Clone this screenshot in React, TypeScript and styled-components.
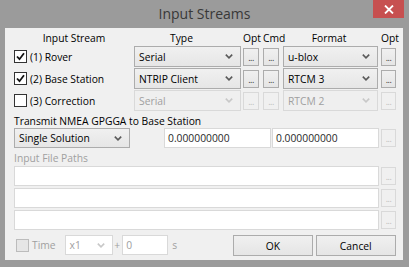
import React from "react";
import styled, { createGlobalStyle } from "styled-components";

const Global = createGlobalStyle`
  html, body { margin: 0; padding: 0; background: #999999; }
  body { font-family: "Open Sans", "Noto Sans", sans-serif; }
`;

const FONT = `"Open Sans", "Noto Sans", sans-serif`;

const Window = styled.div`
  width: 409px;
  height: 267px;
  background: #9b9b9b;
  display: flex;
  flex-direction: column;
  box-sizing: border-box;
  font-family: ${FONT};
  font-size: 10.3px;
  color: #000;
`;

const TitleBar = styled.div`
  height: 28px;
  display: grid;
  grid-template-columns: 1fr auto 1fr;
  align-items: start;
`;

const Title = styled.div`
  grid-column: 2;
  font-size: 14px;
  line-height: 27px;
  color: #383838;
`;

const CloseButton = styled.div`
  grid-column: 3;
  justify-self: end;
  margin-right: 5px;
  width: 31px;
  height: 18px;
  background: #c75050;
  display: flex;
  align-items: center;
  justify-content: center;
`;

const Client = styled.div`
  margin: 0 6px 7px 5px;
  flex: 1;
  background: #f0f0f0;
  padding: 3px 7px 0 9px;
  display: flex;
  flex-direction: column;
`;

const COLS = "120px 109px 20px 20px 98px 15px";

const HeaderGrid = styled.div`
  display: grid;
  grid-template-columns: ${COLS};
  height: 14px;
  margin-bottom: 1px;
`;

const HeaderCell = styled.div<{ $shift?: number }>`
  text-align: center;
  line-height: 14px;
  white-space: nowrap;
  padding-right: ${(p) => (p.$shift ?? 0)}px;
`;

const StreamGrid = styled.div`
  display: grid;
  grid-template-columns: ${COLS};
  grid-auto-rows: 21px;
  row-gap: 1px;
  align-items: center;
`;

const CheckRow = styled.label<{ $disabled?: boolean }>`
  display: flex;
  align-items: center;
  gap: 3px;
  color: ${(p) => (p.$disabled ? "#a0a0a0" : "#000")};
  white-space: nowrap;
`;

const Box = styled.span<{ $disabled?: boolean }>`
  width: 13px;
  height: 13px;
  box-sizing: border-box;
  border: 1px solid ${(p) => (p.$disabled ? "#bcbcbc" : "#333333")};
  background: ${(p) => (p.$disabled ? "#e6e6e6" : "#ffffff")};
  display: flex;
  align-items: center;
  justify-content: center;
  flex: none;
`;

const Select = styled.div<{ $w: number; $h?: number; $disabled?: boolean; $white?: boolean }>`
  width: ${(p) => p.$w}px;
  height: ${(p) => p.$h ?? 21}px;
  box-sizing: border-box;
  border: 1px solid ${(p) => (p.$disabled ? "#d9d9d9" : "#acacac")};
  background: ${(p) =>
    p.$white ? "#ffffff" : p.$disabled ? "#efefef" : "linear-gradient(#f0f0f0, #e6e6e6)"};
  color: ${(p) => (p.$disabled ? "#a0a0a0" : "#000")};
  display: flex;
  align-items: center;
  justify-content: space-between;
  padding: 0 7px 0 4px;
  white-space: nowrap;
`;

const DotButton = styled.div<{ $disabled?: boolean; $w?: number }>`
  width: ${(p) => p.$w ?? 16}px;
  height: 18px;
  box-sizing: border-box;
  border: 1px solid ${(p) => (p.$disabled ? "#d9d9d9" : "#acacac")};
  background: ${(p) => (p.$disabled ? "#f0f0f0" : "linear-gradient(#f0f0f0, #e5e5e5)")};
  color: ${(p) => (p.$disabled ? "#bcbcbc" : "#333")};
  font-size: 9px;
  line-height: 17px;
  text-align: center;
  letter-spacing: -0.5px;
`;

const SectionLabel = styled.div<{ $disabled?: boolean }>`
  height: 14px;
  line-height: 14px;
  margin-top: 3px;
  color: ${(p) => (p.$disabled ? "#a0a0a0" : "#000")};
  white-space: nowrap;
`;

const FlexRow = styled.div<{ $mt?: number; $gap?: number }>`
  display: flex;
  align-items: center;
  margin-top: ${(p) => p.$mt ?? 0}px;
  gap: ${(p) => p.$gap ?? 0}px;
`;

const TextField = styled.div<{ $w: number; $disabled?: boolean; $ml?: number }>`
  width: ${(p) => p.$w}px;
  height: 20px;
  box-sizing: border-box;
  border: 1px solid #d9d9d9;
  background: #fff;
  color: ${(p) => (p.$disabled ? "#a0a0a0" : "#2a2a2a")};
  padding: 0 3px;
  line-height: 18px;
  margin-left: ${(p) => p.$ml ?? 0}px;
  flex: none;
`;

const PathList = styled.div`
  display: flex;
  flex-direction: column;
  gap: 2px;
  margin-top: 1px;
`;

const Gray = styled.span<{ $ml?: number; $mr?: number }>`
  color: #a0a0a0;
  margin-left: ${(p) => p.$ml ?? 0}px;
  margin-right: ${(p) => p.$mr ?? 0}px;
`;

const BottomRow = styled.div`
  display: flex;
  align-items: center;
  margin-top: 4px;
  height: 22px;
`;

const PushButton = styled.div<{ $w: number; $ml?: number }>`
  width: ${(p) => p.$w}px;
  height: 21px;
  box-sizing: border-box;
  border: 1px solid #acacac;
  background: linear-gradient(#f0f0f0, #e5e5e5);
  display: flex;
  align-items: center;
  justify-content: center;
  margin-left: ${(p) => p.$ml ?? 0}px;
  margin-top: 1px;
`;

const Chevron = ({ color = "#5a5a5a" }: { color?: string }) => (
  <svg width="8" height="5" viewBox="0 0 8 5">
    <path d="M0.8 0.6 L4 3.8 L7.2 0.6" fill="none" stroke={color} strokeWidth="1.6" />
  </svg>
);

const Check = () => (
  <svg width="9" height="9" viewBox="0 0 9 9">
    <path d="M1 4.5 L3.5 7.2 L8 1.2" fill="none" stroke="#111" strokeWidth="1.8" />
  </svg>
);

type Stream = { label: string; checked: boolean; type: string; format: string; disabled?: boolean };

const streams: Stream[] = [
  { label: "(1) Rover", checked: true, type: "Serial", format: "u-blox" },
  { label: "(2) Base Station", checked: true, type: "NTRIP Client", format: "RTCM 3" },
  { label: "(3) Correction", checked: false, type: "Serial", format: "RTCM 2", disabled: true },
];

export default function App() {
  return (
    <>
      <Global />
      <Window>
        <TitleBar>
          <Title>Input Streams</Title>
          <CloseButton>
            <svg width="10" height="9" viewBox="0 0 10 9">
              <path d="M1 0.5 L9 8.5 M9 0.5 L1 8.5" stroke="#fff" strokeWidth="1.8" />
            </svg>
          </CloseButton>
        </TitleBar>
        <Client>
          <HeaderGrid>
            <HeaderCell $shift={-6}>Input Stream</HeaderCell>
            <HeaderCell $shift={14}>Type</HeaderCell>
            <HeaderCell $shift={11}>Opt</HeaderCell>
            <HeaderCell $shift={7}>Cmd</HeaderCell>
            <HeaderCell $shift={6}>Format</HeaderCell>
            <HeaderCell $shift={0}>Opt</HeaderCell>
          </HeaderGrid>
          <StreamGrid>
            {streams.map((s) => (
              <React.Fragment key={s.label}>
                <CheckRow>
                  <Box>{s.checked && <Check />}</Box>
                  {s.label}
                </CheckRow>
                <Select $w={107} $disabled={s.disabled}>
                  {s.type}
                  <Chevron color={s.disabled ? "#c8c8c8" : "#5a5a5a"} />
                </Select>
                <DotButton $disabled={s.disabled}>...</DotButton>
                <DotButton $disabled={s.disabled}>...</DotButton>
                <Select $w={95} $disabled={s.disabled}>
                  {s.format}
                  <Chevron color={s.disabled ? "#c8c8c8" : "#5a5a5a"} />
                </Select>
                <DotButton $w={15} $disabled={s.disabled}>...</DotButton>
              </React.Fragment>
            ))}
          </StreamGrid>
          <SectionLabel>Transmit NMEA GPGGA to Base Station</SectionLabel>
          <FlexRow>
            <Select $w={116} $h={20}>
              Single Solution
              <Chevron />
            </Select>
            <TextField $w={107} $ml={34}>0.000000000</TextField>
            <TextField $w={107} $ml={1}>0.000000000</TextField>
            <DotButton $w={15} $disabled style={{ marginLeft: 2 }}>...</DotButton>
          </FlexRow>
          <SectionLabel $disabled>Input File Paths</SectionLabel>
          <PathList>
            {[0, 1, 2].map((i) => (
              <FlexRow key={i} $gap={2}>
                <TextField $w={365} />
                <DotButton $w={15} $disabled>...</DotButton>
              </FlexRow>
            ))}
          </PathList>
          <BottomRow>
            <CheckRow $disabled style={{ marginLeft: 2 }}>
              <Box $disabled />
              Time
            </CheckRow>
            <Select $w={49} $h={20} $disabled $white style={{ marginLeft: 9 }}>
              x1
              <Chevron color="#c8c8c8" />
            </Select>
            <Gray $ml={1} $mr={2}>+</Gray>
            <TextField $w={46} $disabled>0</TextField>
            <Gray $ml={4}>s</Gray>
            <PushButton $w={80} $ml={56}>OK</PushButton>
            <PushButton $w={81} $ml={3}>Cancel</PushButton>
          </BottomRow>
        </Client>
      </Window>
    </>
  );
}
